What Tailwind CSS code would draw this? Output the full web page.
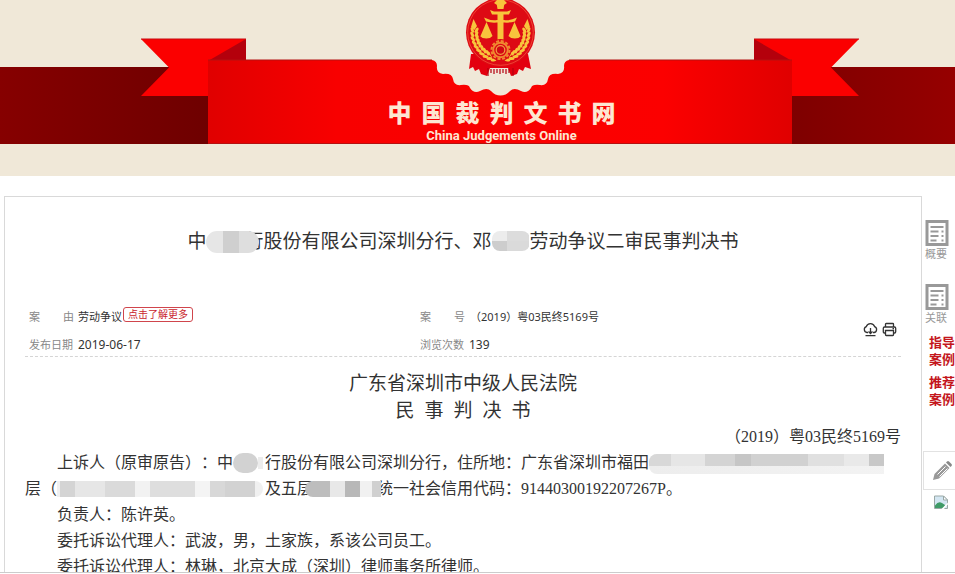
<!DOCTYPE html>
<html lang="zh-CN">
<head>
  <meta charset="UTF-8" />
  <meta name="viewport" content="width=device-width, initial-scale=1.0" />
  <title>中国裁判文书网</title>
  <script src="https://cdn.jsdelivr.net/npm/@tailwindcss/browser@4"></script>
  <style>
    body { font-family: 'Noto Sans', 'Noto Sans CJK SC', sans-serif; text-spacing-trim: space-all; }
  </style>
</head>
<body class="flex h-screen flex-col overflow-hidden bg-white text-[#333]">
  <!-- 顶部横幅 -->
  <header class="relative shrink-0 bg-[#f0e8d8] pb-8">
    <svg class="block w-full" viewBox="0 0 955 144" aria-hidden="true">
      <defs>
        <linearGradient id="panel" x1="0" x2="1">
          <stop offset="0" stop-color="#e00000" />
          <stop offset=".22" stop-color="#f80000" />
          <stop offset=".78" stop-color="#fc0000" />
          <stop offset="1" stop-color="#e00000" />
        </linearGradient>
        <linearGradient id="band-left" x1="0" x2="1">
          <stop offset="0" stop-color="#860000" />
          <stop offset="1" stop-color="#6e0000" />
        </linearGradient>
        <linearGradient id="band-right" x1="0" x2="1">
          <stop offset="0" stop-color="#7e0000" />
          <stop offset="1" stop-color="#960000" />
        </linearGradient>
        <g id="grain">
          <ellipse cx="500" cy="56.500" rx="3" ry="1.500" transform="rotate(28 500 56.500)" />
          <ellipse cx="500" cy="60.800" rx="3" ry="1.500" transform="rotate(-24 500 60.800)" />
        </g>
        <g id="ear">
          <use href="#grain" transform="rotate(13 500.5 32.5)" />
          <use href="#grain" transform="rotate(22 500.5 32.5)" />
          <use href="#grain" transform="rotate(31 500.5 32.5)" />
          <use href="#grain" transform="rotate(40 500.5 32.5)" />
          <use href="#grain" transform="rotate(49 500.5 32.5)" />
          <use href="#grain" transform="rotate(58 500.5 32.5)" />
          <use href="#grain" transform="rotate(67 500.5 32.5)" />
          <use href="#grain" transform="rotate(76 500.5 32.5)" />
          <use href="#grain" transform="rotate(85 500.5 32.5)" />
          <use href="#grain" transform="rotate(94 500.5 32.5)" />
          <path d="M471 27l2.500-8 3.500 7-2.500 4z" />
        </g>
      </defs>
      <rect y="67" width="209" height="77" fill="url(#band-left)" />
      <rect x="791" y="67" width="164" height="77" fill="url(#band-right)" />
      <!-- 飘带 -->
      <path d="M141 39H246V61H209V96H141L169 67.500z" fill="#fb0000" />
      <path d="M859 39H754V61H791V96H859L831 67.500z" fill="#fb0000" />
      <path d="M246 39V61H208z" fill="#b4000c" />
      <path d="M754 39V61H792z" fill="#b4000c" />
      <path d="M141 39H246M754 39H859" stroke="#c80a10" />
      <path d="M208 60H432Q437 61 437 66Q436 73 443 74Q452 73 453 79Q454 86 461 85Q469 84 470 88Q474 94 480 91Q487 87 491 91Q495 95.500 500.500 95.500Q506 95.500 510 91Q514 87 521 91Q527 94 531 88Q532 84 540 85Q547 86 548 79Q549 73 558 74Q565 73 564 66Q564 61 569 60H792V144H208z" fill="url(#panel)" />
      <path d="M208 60H432M569 60H792M208 143.500H792" stroke="#b51010" />
      <!-- 徽章 -->
      <path d="M471 54l-2 15 4-2 2 4 4-2 2 5 6 2 3-8 18 0 3 8 6-2 2-5 4 2 2-4 6 2-3-15z" fill="#e3000f" />
      <path d="M488 68v8M491 69v4M494 69v5M497 69v4M500 69v5M503 69v4M506 69v5M509 69v4M513 68v8" stroke="#b30010" stroke-width="1.200" />
      <circle cx="500.500" cy="32.500" r="34.500" fill="#dd0a14" />
      <circle cx="500.500" cy="32.500" r="32.800" fill="none" stroke="#f2503a" stroke-width=".8" />
      <g fill="#f8c43c">
        <use href="#ear" />
        <use href="#ear" transform="translate(1001 0) scale(-1 1)" />
        <path d="M497.500 12h6v28h-6zM490 10l4 1.500h13l4-1.500-2 4.500h-17zM496.500 3h8l-1 6h-6zM494 3l3-3h7l3 3-3 2h-7z" />
        <path d="M484 17.500q7 3.500 13 2.500h7q6 1 13-2.500l-2 4q-5 1.500-11 1h-7q-6 .5-11-1z" />
        <path d="M486.500 22L480.500 36H492.500zM480 36h12.500q-2 2.500-6.200 2.500T480 36z" />
        <path d="M514.500 22L508.500 36H520.500zM508.500 36H521q-2 2.500-6.200 2.500T508.500 36z" />
      </g>
      <circle cx="500.500" cy="50" r="11" fill="#dd0a14" />
      <circle cx="500.500" cy="50" r="9" fill="none" stroke="#f08a30" stroke-width="2" stroke-dasharray="3 1.710" />
      <circle cx="500.500" cy="50" r="7.300" fill="none" stroke="#f08a30" stroke-width="2" />
      <circle cx="500.500" cy="50" r="4.300" fill="#d00a14" stroke="#f0a040" stroke-width="1.200" />
    </svg>
    <div class="absolute inset-x-0 bottom-8 flex flex-col items-center pl-12 font-bold text-[#fde6d2]">
      <h1 class="flex gap-[10px] font-['Noto_Sans_CJK_SC',sans-serif] text-[24px] leading-8 font-black">
        <span>中</span><span>国</span><span>裁</span><span>判</span><span>文</span><span>书</span><span>网</span>
      </h1>
      <p class="font-['Roboto','Noto_Sans',sans-serif] text-[13px] leading-4">China Judgements Online</p>
    </div>
  </header>

  <div class="mt-5 mb-px flex min-h-0 flex-1 border-b border-[#ccc]">
    <!-- 文书正文 -->
    <main class="ml-1 min-w-0 flex-1 overflow-hidden border-x border-t border-[#d9d9d9] px-5 pt-[30px]">
      <h2 class="flex justify-center text-[19px] leading-7">
        <span>中</span>
        <span class="relative flex w-[57px] justify-end" aria-hidden="true">行
          <span class="absolute top-1 left-0 flex h-[22px] w-[53px] overflow-hidden rounded-full">
            <span class="w-[17px] bg-[#e6e6e6]"></span><span class="w-4 bg-[#cfcfcf]"></span><span class="flex-1 bg-[#dedede]"></span>
          </span>
        </span>
        <span>股份有限公司深圳分行、邓</span>
        <span class="grid w-[38px] grid-cols-[40%_60%] self-center overflow-hidden rounded-lg" aria-hidden="true">
          <span class="h-[10px] bg-[#ececec]"></span><span class="bg-[#dcdcdc]"></span>
          <span class="h-[10px] bg-[#cdcdcd]"></span><span class="bg-[#dadada]"></span>
        </span>
        <span>劳动争议二审民事判决书</span>
      </h2>

      <div class="mt-13 flex items-center border-b border-dashed border-[#d5d5d5] pb-px pl-1 text-[11px] leading-5">
        <dl class="grid flex-1 grid-cols-[391px_1fr] gap-y-2">
          <div class="flex gap-1">
            <dt class="flex w-[45px] justify-between text-[#888]"><span>案</span><span>由</span></dt>
            <dd class="flex items-start">劳动争议<button class="ml-px h-[15px] rounded-[3px] border border-[#d0454c] px-1 text-[10px] leading-[13px] text-[#c9252d]">点击了解更多</button></dd>
          </div>
          <div class="flex">
            <dt class="flex w-[45px] justify-between text-[#888]"><span>案</span><span>号</span></dt>
            <dd class="ml-[5px]">（2019）粤03民终5169号</dd>
          </div>
          <div class="flex gap-1">
            <dt class="w-[45px] text-[#888]">发布日期</dt>
            <dd class="text-[12px]">2019-06-17</dd>
          </div>
          <div class="flex gap-1">
            <dt class="w-[45px] text-[#888]">浏览次数</dt>
            <dd class="text-[12px]">139</dd>
          </div>
        </dl>
        <div class="mr-1 flex gap-1 pb-1">
          <button aria-label="下载">
            <svg class="size-[15px]" viewBox="0 0 15 15" fill="none" stroke="#333" stroke-width="1.300">
              <path d="M5 10.500H4A3 3 0 0 1 3.300 4.700A4.300 4.300 0 0 1 11.600 4.700A3 3 0 0 1 11 10.500H10" />
              <path d="M7.500 6v5.500M5.500 9.500l2 2 2-2M2.500 13.600h10" />
            </svg>
          </button>
          <button aria-label="打印">
            <svg class="size-[15px]" viewBox="0 0 15 15" fill="none" stroke="#333" stroke-width="1.300">
              <path d="M3.500 5V2.200Q3.500 1.500 4.200 1.500H10.800Q11.500 1.500 11.500 2.200V5" />
              <path d="M3.500 11H2.500Q1.300 11 1.300 9.800V6.200Q1.300 5 2.500 5H12.500Q13.700 5 13.700 6.200V9.800Q13.700 11 12.500 11H11.500" />
              <path d="M3.500 8.500H11.500V12.800Q11.500 13.500 10.800 13.500H4.200Q3.500 13.500 3.500 12.800zM10.500 6.700h1.500" />
            </svg>
          </button>
        </div>
      </div>

      <article class="pt-[13px] font-['Liberation_Serif','Noto_Sans_CJK_SC',serif] text-[16px] leading-[26px]">
        <h3 class="text-center text-[19px] leading-[27px]">广东省深圳市中级人民法院</h3>
        <h3 class="flex justify-center gap-[10px] text-[19px] leading-[27px]">
          <span>民</span><span>事</span><span>判</span><span>决</span><span>书</span>
        </h3>
        <p class="text-right">（2019）粤03民终5169号</p>
        <p class="flex pl-8 whitespace-nowrap">
          <span>上诉人（原审原告）：中</span>
          <span class="flex w-8 items-center" aria-hidden="true">
            <span class="h-5 w-[25px] rounded-full bg-[#d2d2d2]"></span><span class="h-3 w-[5px] bg-[#ececec]"></span>
          </span>
          <span>行股份有限公司深圳分行，住所地：广东省深圳市福田</span>
          <span class="mt-1 flex h-5 w-[249px] items-start overflow-hidden rounded-l-lg bg-linear-to-r from-[#ededed] to-[#f3f3f3]" aria-hidden="true">
            <span class="h-3 w-[22px] bg-[#d8d8d8]"></span>
            <span class="h-3 w-[34px] bg-[#e6e6e6]"></span>
            <span class="h-3 w-[30px] bg-[#d4d4d4]"></span>
            <span class="h-3 w-4 bg-[#c6c6c6]"></span>
            <span class="h-3 w-[57px] bg-[#d1d1d1]"></span>
            <span class="h-3 w-[36px] bg-[#e0e0e0]"></span>
            <span class="h-3 w-[25px] bg-[#e9e9e9]"></span>
            <span class="h-3 w-[15px] bg-[#c8c8c8]"></span>
            <span class="h-5 flex-1 bg-white"></span>
          </span>
        </p>
        <p class="flex whitespace-nowrap">
          <span>层（</span>
          <span class="flex w-52 items-center" aria-hidden="true">
            <span class="h-4 w-[3px] bg-[#f0f0f0]"></span>
            <span class="h-4 w-[15px] bg-[#d4d4d4]"></span>
            <span class="h-4 w-[30px] bg-[#e6e6e6]"></span>
            <span class="h-4 w-[30px] bg-[#dadada]"></span>
            <span class="h-4 w-[15px] bg-[#f2f2f2]"></span>
            <span class="h-4 w-[45px] bg-[#dedede]"></span>
            <span class="h-4 w-[15px] bg-[#f4f4f4]"></span>
            <span class="h-4 w-[15px] bg-[#d8d8d8]"></span>
            <span class="h-4 w-[30px] bg-[#d2d2d2]"></span>
            <span class="h-4 w-[8px] rounded-r-full bg-[#f0f0f0]"></span>
          </span>
          <span>及五层</span>
          <span class="relative w-16" aria-hidden="true">
            <span class="absolute top-[5px] -left-2 flex h-4 w-[76px] overflow-hidden rounded-l-full">
              <span class="w-[25px] bg-[#bdbdbd]"></span><span class="w-[15px] bg-[#e8e8e8]"></span><span class="w-[15px] bg-[#b8b8b8]"></span><span class="w-[12px] bg-[#f1f1f1]"></span><span class="flex-1 bg-[#d0d0d0]"></span>
            </span>
          </span>
          <span>统一社会信用代码：91440300192207267P。</span>
        </p>
        <p class="pl-8">负责人：陈许英。</p>
        <p class="pl-8">委托诉讼代理人：武波，男，土家族，系该公司员工。</p>
        <p class="pl-8">委托诉讼代理人：林琳，北京大成（深圳）律师事务所律师。</p>
      </article>
    </main>

    <!-- 右侧工具栏 -->
    <aside class="flex w-[33px] shrink-0 flex-col overflow-hidden text-[11px] leading-4 text-[#999]">
      <a href="#" class="mt-6 flex flex-col pl-[3px]">
        <svg class="h-[26px] w-6" viewBox="0 0 24 26" fill="none" stroke="#999" stroke-width="2">
          <path d="M2 1.500H22V24.500H2z" stroke-width="3" />
          <path d="M5.500 7H18.500M5.500 11.500H13.500M16.500 11.500H18.500M5.500 16H13.500M16.500 16H18.500M5.500 20.500H11.500M16.500 20.500H18.500" />
        </svg>
        概要
      </a>
      <a href="#" class="mt-[22px] flex flex-col pl-[3px]">
        <svg class="h-[26px] w-6" viewBox="0 0 24 26" fill="none" stroke="#999" stroke-width="2">
          <path d="M2 1.500H22V24.500H2z" stroke-width="3" />
          <path d="M5.500 7H18.500M5.500 11.500H13.500M16.500 11.500H18.500M5.500 16H13.500M16.500 16H18.500M5.500 20.500H11.500M16.500 20.500H18.500" />
        </svg>
        关联
      </a>
      <a href="#" class="mt-2 pl-[7px] text-[13px] leading-[17px] font-bold text-[#c4161c]">指导案例</a>
      <a href="#" class="mt-[6px] pl-[7px] text-[13px] leading-[17px] font-bold text-[#c4161c]">推荐案例</a>
      <button class="mt-[43px] ml-px flex h-[39px] items-center justify-center border-y border-l border-[#e2e2e2]" aria-label="批注">
        <svg class="ml-1 size-5" viewBox="0 0 20 20">
          <path d="M1 19l1.500-6L13 2.500l4.500 4.500L7 17.500z" fill="#999" />
          <path d="M14 1.500l1-1q1-.8 2 0l2.500 2.500q.8 1 0 2l-1 1z" fill="#888" />
          <path d="M5.500 13.500l8-8M7.500 15.500l8-8" stroke="#fff" />
        </svg>
      </button>
      <svg class="mt-[5px] ml-3 h-[15px] w-[14px]" viewBox="0 0 14 15">
        <path d="M.5 1H9.500L13.500 5V13.500H.5z" fill="#d3e6f2" stroke="#9aa8a6" />
        <path d="M9.500 1V5H13.500z" fill="#fff" stroke="#9aa8a6" />
        <path d="M1 13V10.500Q4.500 5.500 8 8L11 10V13z" fill="#3f9b68" />
        <path d="M7 14.500L13.800 7.500V9.500L9.500 14.500z" fill="#fff" />
      </svg>
    </aside>
  </div>
</body>
</html>
